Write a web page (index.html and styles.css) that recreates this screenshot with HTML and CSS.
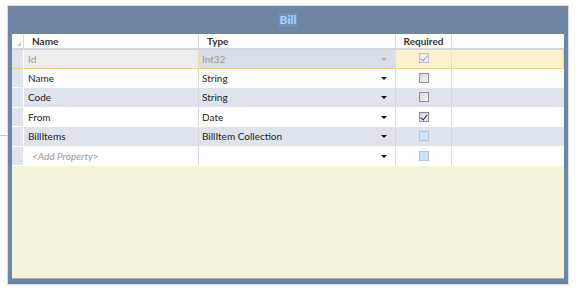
FILE: index.html
```html
<!DOCTYPE html>
<html lang="en">
<head>
    <meta charset="UTF-8">
    <title>Bill</title>
    <link rel="stylesheet" href="styles.css">
</head>
<body>
    <div class="link-line"></div>
    <div class="entity">
        <div class="entity-title"><span class="title-text">Bill</span></div>
        <div class="grid">
            <div class="row head">
                <div class="sel"><span class="corner"></span></div>
                <div class="cell">Name</div>
                <div class="cell">Type</div>
                <div class="cell center">Required</div>
                <div class="cell last"></div>
            </div>
            <div class="row current">
                <div class="sel"></div>
                <div class="cell name ro">Id</div>
                <div class="cell type ro">Int32<span class="arrow"></span></div>
                <div class="cell center"><span class="check checked disabled"></span></div>
                <div class="cell last"></div>
            </div>
            <div class="row">
                <div class="sel"></div>
                <div class="cell name">Name</div>
                <div class="cell type">String<span class="arrow"></span></div>
                <div class="cell center"><span class="check"></span></div>
                <div class="cell last"></div>
            </div>
            <div class="row alt">
                <div class="sel"></div>
                <div class="cell name">Code</div>
                <div class="cell type">String<span class="arrow"></span></div>
                <div class="cell center"><span class="check"></span></div>
                <div class="cell last"></div>
            </div>
            <div class="row">
                <div class="sel"></div>
                <div class="cell name">From</div>
                <div class="cell type">Date<span class="arrow"></span></div>
                <div class="cell center"><span class="check checked"></span></div>
                <div class="cell last"></div>
            </div>
            <div class="row alt">
                <div class="sel"></div>
                <div class="cell name">BillItems</div>
                <div class="cell type">BillItem Collection<span class="arrow"></span></div>
                <div class="cell center"><span class="check disabled"></span></div>
                <div class="cell last"></div>
            </div>
            <div class="row">
                <div class="sel"></div>
                <div class="cell name new">&lt;Add Property&gt;</div>
                <div class="cell type"><span class="arrow"></span></div>
                <div class="cell center"><span class="check disabled"></span></div>
                <div class="cell last"></div>
            </div>
            <div class="filler"></div>
        </div>
    </div>
</body>
</html>
```

FILE: styles.css
```css
body {
    margin: 0;
    background: #fff;
    font-family: Lato, "Liberation Sans", sans-serif;
    font-size: 10px;
    color: #222;
}
.link-line {
    position: absolute;
    left: 0;
    top: 135px;
    width: 8px;
    height: 1px;
    background: #c9ced6;
}
.entity {
    box-sizing: border-box;
    width: 562px;
    height: 280px;
    margin: 5px 0 0 7px;
    border: 1px solid #d6dde6;
    background: #6e86a2;
    padding: 0 4px 5px 4px;
    display: flex;
    flex-direction: column;
}
.entity-title {
    height: 28px;
    display: flex;
    align-items: center;
    justify-content: center;
}
.title-text {
    font-size: 12px;
    font-weight: bold;
    color: #a9d6ff;
    background: #7292b8;
    padding: 0 1px;
    line-height: 14px;
}
.grid {
    flex: 1;
    display: flex;
    flex-direction: column;
    background: #f4f4dc;
    border-bottom: 1px solid #9fb0c4;
}
.row {
    display: grid;
    grid-template-columns: 12px 175px 197px 56px 1fr;
    height: 19.5px;
    background: #fff;
}
.row.alt {
    background: #dfe3ec;
}
.row.head {
    height: 15px;
    font-weight: bold;
    color: #333;
}
.row.head .cell {
    padding-left: 8px;
}
.row.head .cell.center {
    padding-left: 0;
}
.sel {
    background: #dfe3ec;
    border-right: 1px solid #fff;
    border-bottom: 1px solid #fff;
    position: relative;
}
.head .sel {
    background: #fff;
    border-right: 1px solid #d3d8e0;
    border-bottom: 1px solid #d3d8e0;
}
.corner {
    position: absolute;
    right: 2px;
    bottom: 2px;
    width: 0;
    height: 0;
    border-left: 4px solid transparent;
    border-bottom: 4px solid #c4c8ce;
}
.cell {
    position: relative;
    display: flex;
    align-items: center;
    padding-left: 4px;
    border-right: 1px solid #d3d8e0;
    border-bottom: 1px solid #fff;
    white-space: nowrap;
}
.head .cell {
    border-bottom: 1px solid #d3d8e0;
}
.cell.type {
    padding-left: 3px;
}
.cell.center {
    justify-content: center;
    padding-left: 0;
}
.cell.last {
    border-right: none;
}
.cell.new {
    color: #999;
    font-style: italic;
    padding-left: 8px;
}
.arrow {
    position: absolute;
    right: 8px;
    top: 8px;
    width: 0;
    height: 0;
    border-left: 3px solid transparent;
    border-right: 3px solid transparent;
    border-top: 3px solid #111;
}
.row.current {
    background: #fdf0cc;
    box-shadow: inset 0 0 0 1px #ecd38b;
}
.current .cell {
    border-bottom-color: transparent;
    border-right-color: #f0e0b0;
}
.current .sel {
    border-top: 1px solid #ecd38b;
    border-bottom: 1px solid #ecd38b;
}
.current .cell.name {
    background: #ededed;
    border-top: 1px solid #ecd38b;
    border-bottom: 1px solid #ecd38b;
}
.current .cell.type {
    background: #dadee8;
    border-top: 1px solid #ecd38b;
    border-bottom: 1px solid #ecd38b;
}
.current .cell.last {
    border-right: 1px solid #ecd38b;
}
.ro {
    color: #9a9a9a;
}
.ro .arrow {
    border-top-color: #aeb3bd;
}
.check {
    box-sizing: border-box;
    width: 10px;
    height: 10px;
    border: 1px solid #8e8e8e;
    background: linear-gradient(135deg, #d6d6d6, #f8f8f8);
    position: relative;
}
.check.disabled {
    border-color: #b5c4d4;
    background: #cfe2f2;
}
.check.checked::after {
    content: "";
    position: absolute;
    left: 2px;
    top: 0;
    width: 3px;
    height: 6px;
    border-right: 1.5px solid #1f1f8c;
    border-bottom: 1.5px solid #1f1f8c;
    transform: rotate(40deg);
}
.check.checked.disabled {
    background: #eef0f4;
    border-color: #b9bec8;
}
.check.checked.disabled::after {
    border-color: #9aa6bf;
}
.filler {
    flex: 1;
}
```
